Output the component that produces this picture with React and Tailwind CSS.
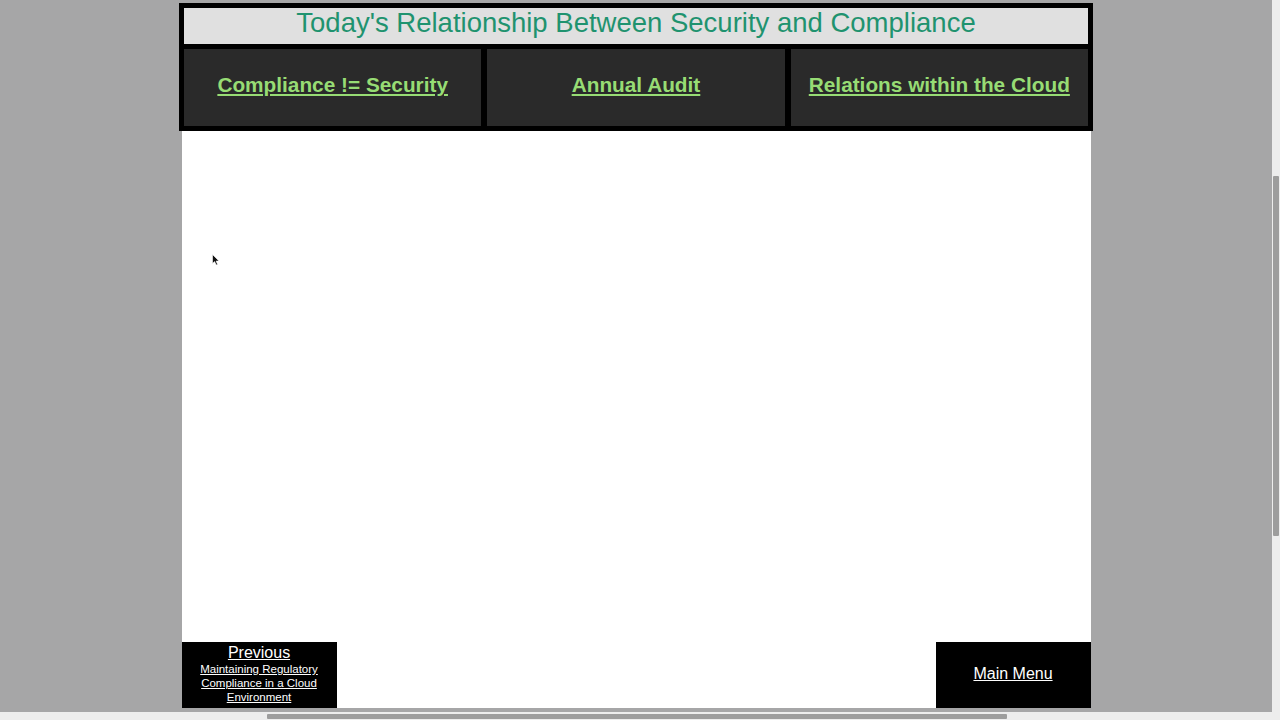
import React from 'react';

const NAV_LINKS = ['Compliance != Security', 'Annual Audit', 'Relations within the Cloud'];

// little mouse pointer that sits on the blank page
const Pointer = () => (
  <svg width="8" height="12" viewBox="0 0 8 12" className="block">
    <path d="M0.5 0.5 L0.5 9.5 L2.6 7.6 L4.2 11 L5.6 10.4 L4.1 7.1 L7 7 Z" fill="#111" stroke="#fff" strokeWidth="0.6" />
  </svg>
);

const App = () => {
  return (
    <div
      className="w-[1280px] h-[720px] overflow-hidden flex flex-col bg-[#ededed]"
      style={{ fontFamily: '"Liberation Sans", Arial, sans-serif' }}
    >
      <div className="flex h-[712px]">
        {/* page */}
        <div className="w-[1272px] h-full bg-[#a6a6a7] flex flex-col items-center pt-[3px]">
          {/* header table */}
          <div className="w-[914px] bg-black p-[5px] flex flex-col gap-[5px]">
            <div className="h-[36px] bg-[#e0e0e0] flex items-center justify-center">
              <h1 className="text-[27.5px] leading-none text-[#1f936f] -mt-[7px]">
                Today's Relationship Between Security and Compliance
              </h1>
            </div>
            <div className="grid grid-cols-3 gap-[6px]">
              {NAV_LINKS.map((label) => (
                <div key={label} className="h-[77px] bg-[#2a2a2a] flex items-center justify-center">
                  <a href="#" className="text-[20.8px] font-bold text-[#97dc74] underline -mt-[5px]">
                    {label}
                  </a>
                </div>
              ))}
            </div>
          </div>

          {/* page body */}
          <div className="w-[909px] h-[577px] bg-white flex flex-col">
            <div className="flex-1 pt-[123px] pl-[30px]">
              <Pointer />
            </div>
            <div className="flex justify-between">
              <a href="#" className="w-[155px] h-[66px] bg-black text-white flex flex-col items-center text-center pt-[1px]">
                <span className="text-[16px] leading-[19px] underline">Previous</span>
                <span className="text-[11.5px] leading-[14px] underline px-3">
                  Maintaining Regulatory Compliance in a Cloud Environment
                </span>
              </a>
              <a href="#" className="w-[155px] h-[66px] bg-black text-white flex items-center justify-center">
                <span className="text-[16px] underline -mt-[2px]">Main Menu</span>
              </a>
            </div>
          </div>
        </div>

        {/* vertical scrollbar */}
        <div className="w-[8px] h-full bg-[#ededed] pt-[176px] px-[1px]">
          <div className="h-[360px] bg-[#9d9d9d] rounded-[1px]" />
        </div>
      </div>

      {/* horizontal scrollbar */}
      <div className="h-[8px] flex items-center pl-[267px]">
        <div className="w-[740px] h-[5px] bg-[#9d9d9d] rounded-[1px]" />
      </div>
    </div>
  );
};

export default App;
